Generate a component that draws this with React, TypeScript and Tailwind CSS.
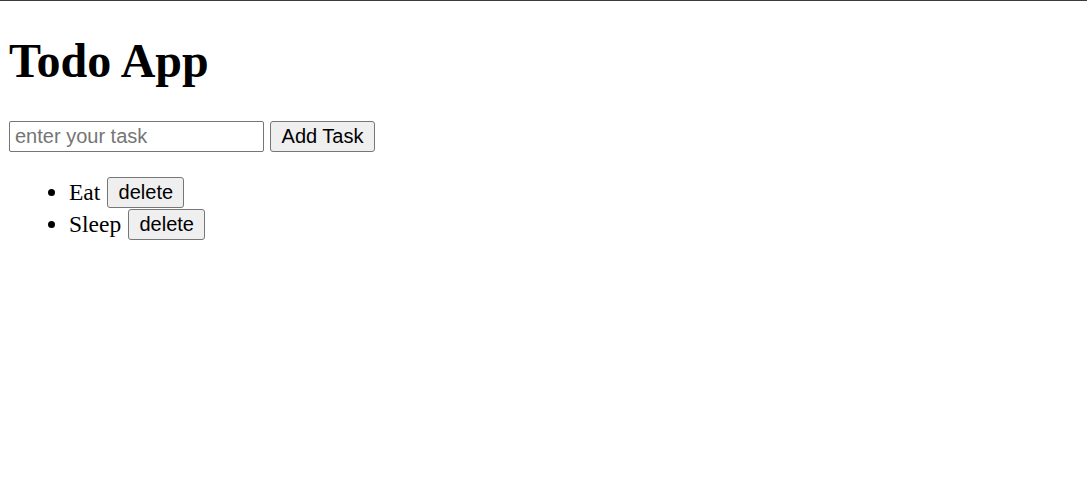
import { useState } from "react";

export default function App() {
  const [tasks, setTasks] = useState<string[]>(["Eat", "Sleep"]);
  const [text, setText] = useState("");

  const addTask = () => {
    if (!text.trim()) return;
    setTasks([...tasks, text.trim()]);
    setText("");
  };

  return (
    <div className="min-h-screen bg-white text-black">
      <div className="h-px w-full bg-[#3b3b3b]" />
      <div className="px-[9px]">
        <h1 className="mt-[32px] mb-[33px] font-['Liberation_Serif',serif] text-[48px] font-bold leading-[55px]">
          Todo App
        </h1>

        <div className="flex h-[31px] items-center gap-[6px] font-['Liberation_Sans',Arial,sans-serif] text-[20px]">
          <input
            value={text}
            onChange={(e) => setText(e.target.value)}
            placeholder="enter your task"
            className="h-[31px] w-[255px] rounded-[2px] border border-[#767676] bg-white px-[5px] leading-[23px] text-black outline-none placeholder:text-[#757575]"
          />
          <button
            onClick={addTask}
            className="h-[31px] w-[105px] rounded-[3px] border border-[#767676] bg-[#efefef] leading-[23px] text-black"
          >
            Add Task
          </button>
        </div>

        <ul className="mt-[24px]">
          {tasks.map((task, i) => (
            <li key={i} className="flex h-[32px] items-center">
              <span className="ml-[39px] h-[7px] w-[7px] shrink-0 rounded-full bg-black" />
              <span className="ml-[14px] font-['Liberation_Serif',serif] text-[23.5px] leading-[31px]">{task}</span>
              <button
                onClick={() => setTasks(tasks.filter((_, j) => j !== i))}
                className="ml-[7px] h-[31px] w-[77px] rounded-[3px] border border-[#767676] bg-[#efefef] font-['Liberation_Sans',Arial,sans-serif] text-[20px] leading-[23px] text-black"
              >
                delete
              </button>
            </li>
          ))}
        </ul>
      </div>
    </div>
  );
}
